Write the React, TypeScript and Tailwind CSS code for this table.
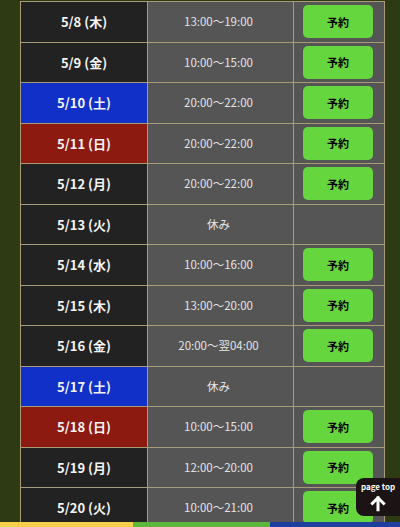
const rows: { date: string; time: string; kind: "w" | "sat" | "sun"; open: boolean }[] = [
  { date: "5/8 (木)", time: "13:00〜19:00", kind: "w", open: true },
  { date: "5/9 (金)", time: "10:00〜15:00", kind: "w", open: true },
  { date: "5/10 (土)", time: "20:00〜22:00", kind: "sat", open: true },
  { date: "5/11 (日)", time: "20:00〜22:00", kind: "sun", open: true },
  { date: "5/12 (月)", time: "20:00〜22:00", kind: "w", open: true },
  { date: "5/13 (火)", time: "休み", kind: "w", open: false },
  { date: "5/14 (水)", time: "10:00〜16:00", kind: "w", open: true },
  { date: "5/15 (木)", time: "13:00〜20:00", kind: "w", open: true },
  { date: "5/16 (金)", time: "20:00〜翌04:00", kind: "w", open: true },
  { date: "5/17 (土)", time: "休み", kind: "sat", open: false },
  { date: "5/18 (日)", time: "10:00〜15:00", kind: "sun", open: true },
  { date: "5/19 (月)", time: "12:00〜20:00", kind: "w", open: true },
  { date: "5/20 (火)", time: "10:00〜21:00", kind: "w", open: true },
];

const dateBg = {
  w: "bg-[#222222]",
  sat: "bg-[#1030c8]",
  sun: "bg-[#8c1a10]",
};

export default function App() {
  return (
    <div
      className="relative h-[527px] w-[400px] overflow-hidden bg-[#2e3a14]"
      style={{ fontFamily: '"Noto Sans CJK JP", "Noto Sans", sans-serif' }}
    >
      <div className="ml-[20px] mt-[1px] w-[365px]">
        <table className="w-full border-collapse">
          <tbody>
            {rows.map((r) => (
              <tr key={r.date} className="h-[40.5px]">
                <td
                  className={`w-[127px] border border-[#a89c78] text-center text-[13px] font-bold text-[#f4f4f4] ${dateBg[r.kind]}`}
                >
                  {r.date}
                </td>
                <td className="w-[146px] border border-[#a89c78] bg-[#555555] pr-[4px] text-center text-[11.5px] text-[#e4e4e4]">
                  {r.time}
                </td>
                <td className="border border-[#a89c78] bg-[#555555] p-0">
                  {r.open && (
                    <div className="flex justify-center pr-[2px]">
                      <button className="h-[33px] w-[70px] rounded-[5px] bg-[#66d63f] text-[11px] font-bold text-black">
                        予約
                      </button>
                    </div>
                  )}
                </td>
              </tr>
            ))}
          </tbody>
        </table>
      </div>

      <div className="absolute bottom-0 left-0 flex h-[5px] w-full">
        <div className="w-[133px] bg-[#f6d04a]" />
        <div className="w-[137px] bg-[#5cb83a]" />
        <div className="flex-1 bg-[#1f3f9e]" />
      </div>

      <div className="absolute right-[-6px] top-[478px] flex h-[38px] w-[50px] flex-col items-center rounded-[8px] bg-[#1c1414] pr-[6px] pt-[4px]">
        <span className="text-[8px] font-bold leading-[10px] text-white">page top</span>
        <svg width="18" height="18" viewBox="0 0 24 24" className="mt-[2px]">
          <path d="M12 21V5M4.5 12.5L12 5l7.5 7.5" stroke="white" strokeWidth="4" fill="none" strokeLinecap="square" />
        </svg>
      </div>
    </div>
  );
}
